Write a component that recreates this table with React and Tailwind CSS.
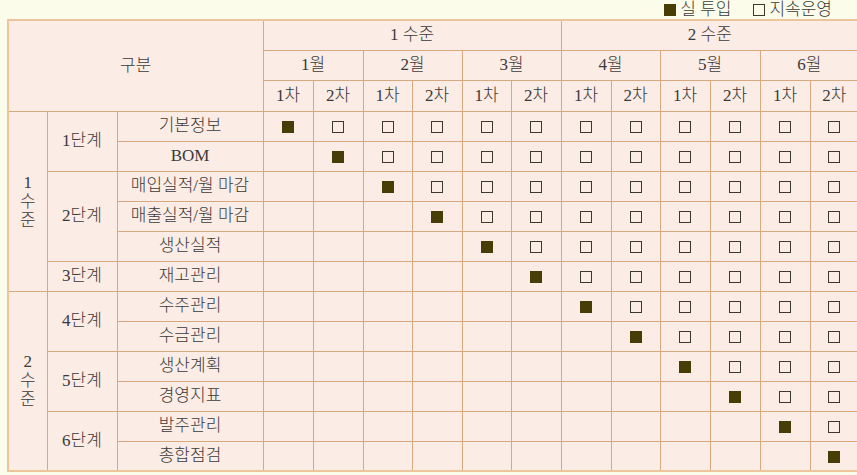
import React from "react";

const months = ["1월", "2월", "3월", "4월", "5월", "6월"];
const colW = [50, 50, 49, 50, 49, 50, 50, 49, 50, 50, 50, 49];

const groups = [
  {
    level: "1",
    stages: [
      { name: "1단계", items: ["기본정보", "BOM"] },
      { name: "2단계", items: ["매입실적/월 마감", "매출실적/월 마감", "생산실적"] },
      { name: "3단계", items: ["재고관리"] },
    ],
  },
  {
    level: "2",
    stages: [
      { name: "4단계", items: ["수주관리", "수금관리"] },
      { name: "5단계", items: ["생산계획", "경영지표"] },
      { name: "6단계", items: ["발주관리", "총합점검"] },
    ],
  },
];

const cell = "border border-[#d8a87e] text-center align-middle p-0 font-light";

function Filled() {
  return <span className="inline-block w-3 h-3 bg-[#463d07] align-middle" />;
}
function Empty() {
  return <span className="inline-block w-3 h-3 border-[1.5px] border-[#3d3a2a] align-middle box-border" />;
}

export default function App() {
  let rowIdx = 0;
  const rows = [];
  groups.forEach((g) => {
    const total = g.stages.reduce((a, s) => a + s.items.length, 0);
    g.stages.forEach((s, si) => {
      s.items.forEach((item, ii) => {
        const r = rowIdx;
        rows.push(
          <tr key={r} className="h-[30px]">
            {si === 0 && ii === 0 && (
              <td rowSpan={total} className={cell}>
                <div className="flex flex-col items-center leading-[19px]">
                  <span>{g.level}</span>
                  <span>수</span>
                  <span>준</span>
                </div>
              </td>
            )}
            {ii === 0 && (
              <td rowSpan={s.items.length} className={cell}>
                {s.name}
              </td>
            )}
            <td className={item === "BOM" ? cell.replace("font-light", "font-normal") : cell}>{item}</td>
            {colW.map((_, c) => (
              <td key={c} className={cell}>
                {c === r ? <Filled /> : c > r ? <Empty /> : null}
              </td>
            ))}
          </tr>
        );
        rowIdx++;
      });
    });
  });

  return (
    <div
      className="w-[857px] h-[475px] overflow-hidden bg-[#fbfdea] text-[#3a3a3a] text-[17px] leading-[20px]"
      style={{ fontFamily: '"Liberation Serif", "Noto Sans CJK KR", serif' }}
    >
      <div className="h-[19px] flex items-center justify-end pr-[25px] font-light">
        <span className="flex items-center gap-[4px]">
          <span className="inline-block w-3 h-3 bg-[#463d07]" />
          <span>실 투입</span>
        </span>
        <span className="flex items-center gap-[4px] ml-[22px]">
          <span className="inline-block w-3 h-3 border-[1.5px] border-[#3d3a2a] box-border" />
          <span>지속운영</span>
        </span>
      </div>
      <div className="pl-[7px]">
        <table className="table-fixed border-collapse bg-[#fbece5] w-[852px] border-2 border-[#ecc59c]">
          <colgroup>
            <col style={{ width: 39 }} />
            <col style={{ width: 70 }} />
            <col style={{ width: 146 }} />
            {colW.map((w, i) => (
              <col key={i} style={{ width: w }} />
            ))}
          </colgroup>
          <thead>
            <tr className="h-[30px]">
              <th colSpan={3} rowSpan={3} className={cell}>
                구분
              </th>
              <th colSpan={6} className={cell}>
                1 수준
              </th>
              <th colSpan={6} className={cell}>
                2 수준
              </th>
            </tr>
            <tr className="h-[30px]">
              {months.map((m) => (
                <th key={m} colSpan={2} className={cell}>
                  {m}
                </th>
              ))}
            </tr>
            <tr className="h-[31px]">
              {months.map((m) => (
                <React.Fragment key={m}>
                  <th className={cell}>1차</th>
                  <th className={cell}>2차</th>
                </React.Fragment>
              ))}
            </tr>
          </thead>
          <tbody>{rows}</tbody>
        </table>
      </div>
    </div>
  );
}
